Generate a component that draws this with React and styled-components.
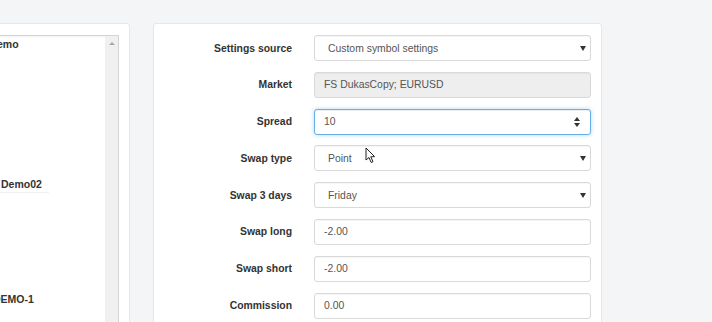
import React from "react";
import styled, { createGlobalStyle } from "styled-components";

const Global = createGlobalStyle`
  html, body {
    margin: 0;
    padding: 0;
    height: 100%;
    overflow: hidden;
    background: #f4f5f7;
    font-family: "Liberation Sans", Arial, sans-serif;
  }
  #root { height: 100%; }
`;

const Page = styled.div`
  display: flex;
  align-items: flex-start;
  gap: 23px;
  padding-top: 23px;
  margin-left: -40px;
  height: 100%;
  box-sizing: border-box;
`;

const SideCard = styled.div`
  width: 170px;
  height: 320px;
  box-sizing: border-box;
  background: #fff;
  border: 1px solid #e5e7ea;
  border-radius: 3px;
  padding: 11px 10px 0 0;
`;

const ListBox = styled.div`
  display: flex;
  height: 100%;
  border: 1px solid #d4d4d4;
  border-left: none;
  border-bottom: none;
  box-shadow: inset 0 1px 2px rgba(0, 0, 0, 0.06);
`;

const Items = styled.div`
  flex: 1;
  overflow: hidden;
`;

const Item = styled.div`
  height: ${(p) => p.h}px;
  padding-left: ${(p) => p.indent}px;
  font-size: 10.5px;
  font-weight: bold;
  color: #333;
  line-height: 14px;
  padding-top: 1px;
  box-sizing: border-box;
  white-space: nowrap;
`;

const ItemRule = styled.div`
  margin-top: 1px;
  margin-left: -40px;
  width: 88px;
  height: 1px;
  background: #f0f0f0;
`;

const ScrollTrack = styled.div`
  width: 13px;
  background: #f0f0f0;
  display: flex;
  justify-content: center;
  padding-top: 6px;
  box-sizing: border-box;
`;

const ScrollArrow = styled.div`
  width: 0;
  height: 0;
  border-left: 3px solid transparent;
  border-right: 3px solid transparent;
  border-bottom: 3px solid #a8a8a8;
`;

const MainCard = styled.div`
  position: relative;
  width: 449px;
  height: 320px;
  box-sizing: border-box;
  background: #fff;
  border: 1px solid #e5e7ea;
  border-radius: 3px;
  padding: 11px 10px 0 0;
`;

const Form = styled.div`
  display: grid;
  grid-template-columns: 138px 277px;
  column-gap: 22px;
  row-gap: 10.8px;
  grid-auto-rows: 26px;
`;

const Label = styled.label`
  display: flex;
  align-items: center;
  justify-content: flex-end;
  font-size: 10.4px;
  font-weight: bold;
  color: #333;
`;

const FieldWrap = styled.div`
  position: relative;
`;

const Input = styled.input`
  width: 100%;
  height: 26px;
  box-sizing: border-box;
  border: 1px solid ${(p) => (p.$focus ? "#66afe9" : "#d9d9d9")};
  border-radius: 3px;
  background: ${(p) => (p.disabled ? "#eeeeee" : "#fff")};
  box-shadow: ${(p) =>
    p.$focus
      ? "inset 0 1px 1px rgba(0,0,0,.075), 0 0 4px rgba(102,175,233,.5)"
      : "inset 0 1px 1px rgba(0,0,0,.04)"};
  padding: 0 ${(p) => (p.$select ? 13 : 9)}px;
  font-family: "Liberation Sans", Arial, sans-serif;
  font-size: 10.4px;
  color: #555;
  outline: none;
  &:disabled { color: #555; opacity: 1; -webkit-text-fill-color: #555; }
`;

const Caret = styled.span`
  position: absolute;
  right: 5px;
  top: 11px;
  width: 0;
  height: 0;
  border-left: 3px solid transparent;
  border-right: 3px solid transparent;
  border-top: 5px solid #333;
`;

const Spinner = styled.span`
  position: absolute;
  right: 11px;
  top: 8px;
  display: flex;
  flex-direction: column;
  gap: 2px;
  &::before, &::after {
    content: "";
    width: 0;
    height: 0;
    border-left: 3.5px solid transparent;
    border-right: 3.5px solid transparent;
  }
  &::before { border-bottom: 4px solid #333; }
  &::after { border-top: 4px solid #333; }
`;

const Cursor = styled.svg`
  position: absolute;
  left: 211px;
  top: 123px;
`;

const rows = [
  { label: "Settings source", value: "Custom symbol settings", kind: "select" },
  { label: "Market", value: "FS DukasCopy; EURUSD", kind: "disabled" },
  { label: "Spread", value: "10", kind: "spin" },
  { label: "Swap type", value: "Point", kind: "select" },
  { label: "Swap 3 days", value: "Friday", kind: "select" },
  { label: "Swap long", value: "-2.00" },
  { label: "Swap short", value: "-2.00" },
  { label: "Commission", value: "0.00" },
];

const Field = ({ value, kind }) => (
  <FieldWrap>
    <Input
      readOnly
      value={value}
      disabled={kind === "disabled"}
      $focus={kind === "spin"}
      $select={kind === "select"}
    />
    {kind === "select" && <Caret />}
    {kind === "spin" && <Spinner />}
  </FieldWrap>
);

export default function App() {
  return (
    <>
      <Global />
      <Page>
        <SideCard>
          <ListBox>
            <Items>
              <Item h={140} indent={15}>
                FXDemo
              </Item>
              <Item h={115} indent={40}>
                Demo02
                <ItemRule />
              </Item>
              <Item h={60} indent={32}>
                DEMO-1
              </Item>
            </Items>
            <ScrollTrack>
              <ScrollArrow />
            </ScrollTrack>
          </ListBox>
        </SideCard>
        <MainCard>
          <Form>
            {rows.map((r) => (
              <React.Fragment key={r.label}>
                <Label>{r.label}</Label>
                <Field value={r.value} kind={r.kind} />
              </React.Fragment>
            ))}
          </Form>
          <Cursor width="11" height="17" viewBox="0 0 11 17">
            <path
              d="M1 1 L1 13 L4 10.5 L6.2 15.5 L8 14.7 L5.8 9.8 L9.6 9.6 Z"
              fill="#fff"
              stroke="#222"
              strokeWidth="1"
              strokeLinejoin="round"
            />
          </Cursor>
        </MainCard>
      </Page>
    </>
  );
}
